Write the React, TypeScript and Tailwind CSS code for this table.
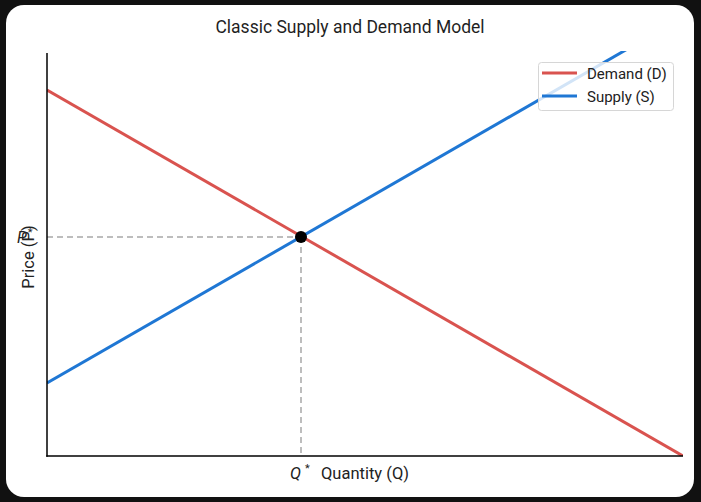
import React from "react";

const RED = "#d9534f";
const BLUE = "#1f77d4";

// plot box in page coordinates (svg viewBox matches the page)
const X0 = 47;
const X1 = 683;
const Y0 = 53;
const Y1 = 456;

function Chart() {
  return (
    <svg
      className="block"
      width={688}
      height={458}
      viewBox="6 39 688 458"
      style={{ fontFamily: "Roboto, 'Liberation Sans', sans-serif" }}
    >
      <defs>
        <clipPath id="plot">
          <rect x={X0} y={Y0 - 2} width={X1 - X0} height={Y1 - Y0 + 2} />
        </clipPath>
      </defs>

      {/* guide lines to equilibrium */}
      <line x1={X0} y1={237} x2={301} y2={237} stroke="#a8a8a8" strokeWidth={1.5} strokeDasharray="6 4" />
      <line x1={301} y1={237} x2={301} y2={Y1} stroke="#a8a8a8" strokeWidth={1.5} strokeDasharray="6 4" />

      <g clipPath="url(#plot)">
        <line x1={X0} y1={90} x2={X1} y2={456} stroke={RED} strokeWidth={3} />
        <line x1={X0} y1={383} x2={X1} y2={17} stroke={BLUE} strokeWidth={3} />
      </g>

      <circle cx={301} cy={237} r={6} fill="#000" />

      {/* axes */}
      <line x1={X0} y1={Y0} x2={X0} y2={Y1 + 0.75} stroke="#000" strokeWidth={1.5} />
      <line x1={X0 - 0.75} y1={Y1} x2={X1} y2={Y1} stroke="#000" strokeWidth={1.5} />

      {/* labels */}
      <text
        x={28}
        y={257}
        fontSize={16.5}
        fill="#222"
        textAnchor="middle"
        dominantBaseline="central"
        transform="rotate(-90 28 257)"
      >
        Price (P)
      </text>
      <text x={17} y={243} fontSize={16} fill="#222">
        <tspan fontStyle="italic">P</tspan>
        <tspan fontSize={11} dx={1} dy={-7}>*</tspan>
      </text>

      <text x={290} y={479} fontSize={16.5} fill="#222">
        <tspan fontStyle="italic">Q</tspan>
        <tspan fontSize={11} dx={4} dy={-7}>*</tspan>
      </text>
      <text x={365} y={479} fontSize={16.5} fill="#222" textAnchor="middle">
        Quantity (Q)
      </text>

      {/* legend */}
      <rect x={538.5} y={62.5} width={135} height={48} rx={3} fill="#fff" fillOpacity={0.8} stroke="#d6d6d6" />
      <line x1={542} y1={73} x2={577} y2={73} stroke={RED} strokeWidth={3} />
      <line x1={542} y1={96} x2={577} y2={96} stroke={BLUE} strokeWidth={3} />
      <text x={587} y={78.5} fontSize={15} fill="#222">
        Demand (D)
      </text>
      <text x={587} y={101.5} fontSize={15} fill="#222">
        Supply (S)
      </text>
    </svg>
  );
}

export default function App() {
  return (
    <div className="h-[502px] w-[701px] bg-[#111] pb-[5px] pl-[6px] pr-[7px] pt-[5px]">
      <div className="flex h-full w-full flex-col overflow-hidden rounded-[18px] bg-white">
        <h1 className="pt-[10px] text-center text-[17.5px] leading-[24px] text-[#1f1f1f] [font-family:Roboto,'Liberation_Sans',sans-serif]">
          Classic Supply and Demand Model
        </h1>
        <Chart />
      </div>
    </div>
  );
}
